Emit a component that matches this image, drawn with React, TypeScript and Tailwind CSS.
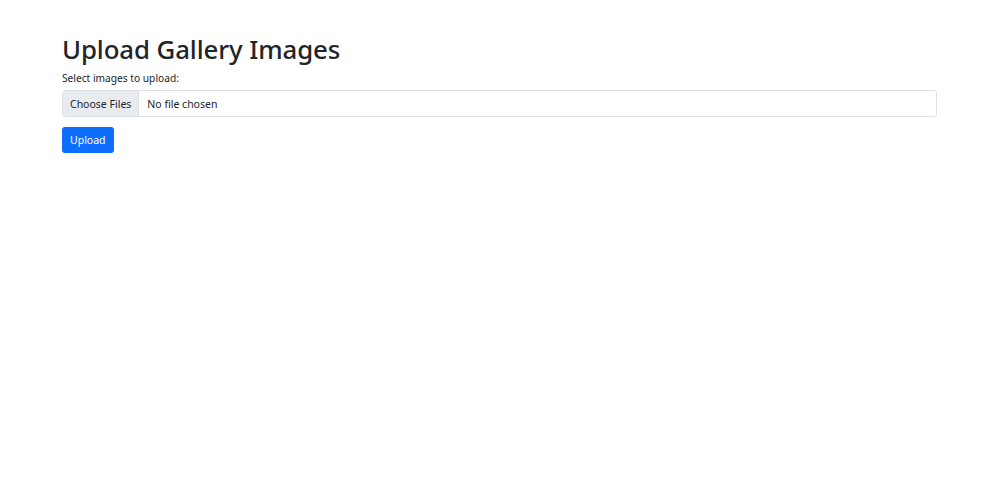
import { useState } from 'react';

export default function App() {
  const [fileLabel, setFileLabel] = useState('No file chosen');

  return (
    <div className="min-h-screen bg-white font-['Noto_Sans','Open_Sans',sans-serif] text-[#212529]">
      <div className="px-[62px] pt-[31px]">
        <h1 className="text-[25.8px] leading-[36px] font-medium tracking-[-0.1px]">Upload Gallery Images</h1>
        <form onSubmit={(e) => e.preventDefault()} className="mt-[3px]">
          <label htmlFor="images" className="block text-[10.2px] leading-[16px]">
            Select images to upload:
          </label>
          <label className="mt-[4px] flex h-[27px] w-[875px] cursor-pointer items-stretch overflow-hidden rounded-[3px] border border-[#dee2e6] text-[10.5px]">
            <span className="flex items-center border-r border-[#dee2e6] bg-[#e9ecef] px-[7px] pt-[2px]">Choose Files</span>
            <span className="flex items-center px-[8px] pt-[2px]">{fileLabel}</span>
            <input
              id="images"
              type="file"
              multiple
              className="sr-only"
              onChange={(e) => {
                const n = e.target.files?.length ?? 0;
                setFileLabel(n === 0 ? 'No file chosen' : n === 1 ? e.target.files![0].name : `${n} files`);
              }}
            />
          </label>
          <button
            type="submit"
            className="mt-[10px] h-[26px] rounded-[3px] bg-[#0d6efd] px-[8px] pt-[2px] text-[10.5px] text-white"
          >
            Upload
          </button>
        </form>
      </div>
    </div>
  );
}
